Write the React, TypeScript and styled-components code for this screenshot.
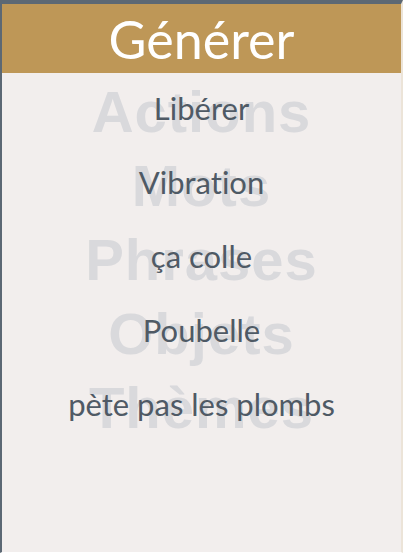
import styled, { createGlobalStyle } from "styled-components";

const GlobalStyle = createGlobalStyle`
  html, body {
    margin: 0;
    padding: 0;
    background: #f2eeed;
  }
`;

const Panel = styled.div`
  box-sizing: border-box;
  width: 403px;
  height: 553px;
  display: flex;
  flex-direction: column;
  background: #f2eeed;
  border-top: 4px solid #5c6874;
  border-left: 2px solid #5c6874;
  border-right: 2px solid #ece4d8;
  border-bottom: 1px solid #ffffff;
  overflow: hidden;
`;

const Header = styled.div`
  height: 69px;
  display: flex;
  align-items: center;
  justify-content: center;
  background: #be9757;
  color: #ffffff;
  font-family: Lato, "Open Sans", sans-serif;
  font-size: 52px;
  line-height: 1;
`;

const List = styled.div`
  display: flex;
  flex-direction: column;
  padding-top: 2px;
`;

const Item = styled.div`
  height: 74px;
  display: grid;
  place-items: center;
`;

const Ghost = styled.span`
  grid-area: 1 / 1;
  font-family: "Liberation Sans", Arial, sans-serif;
  font-weight: 700;
  font-size: 58px;
  line-height: 1;
  letter-spacing: 1px;
  color: #d9d9dc;
`;

const Label = styled.span`
  grid-area: 1 / 1;
  position: relative;
  font-family: Lato, "Open Sans", sans-serif;
  font-size: 31px;
  line-height: 1;
  font-variant-ligatures: none;
  color: #4f5a65;
  margin-bottom: 8px;
`;

const rows = [
  { ghost: "Actions", label: "Libérer" },
  { ghost: "Mots", label: "Vibration" },
  { ghost: "Phrases", label: "ça colle" },
  { ghost: "Objets", label: "Poubelle" },
  { ghost: "Thèmes", label: "pète pas les plombs" },
];

export default function App() {
  return (
    <>
      <GlobalStyle />
      <Panel>
        <Header>Générer</Header>
        <List>
          {rows.map((r) => (
            <Item key={r.ghost}>
              <Ghost>{r.ghost}</Ghost>
              <Label>{r.label}</Label>
            </Item>
          ))}
        </List>
      </Panel>
    </>
  );
}
